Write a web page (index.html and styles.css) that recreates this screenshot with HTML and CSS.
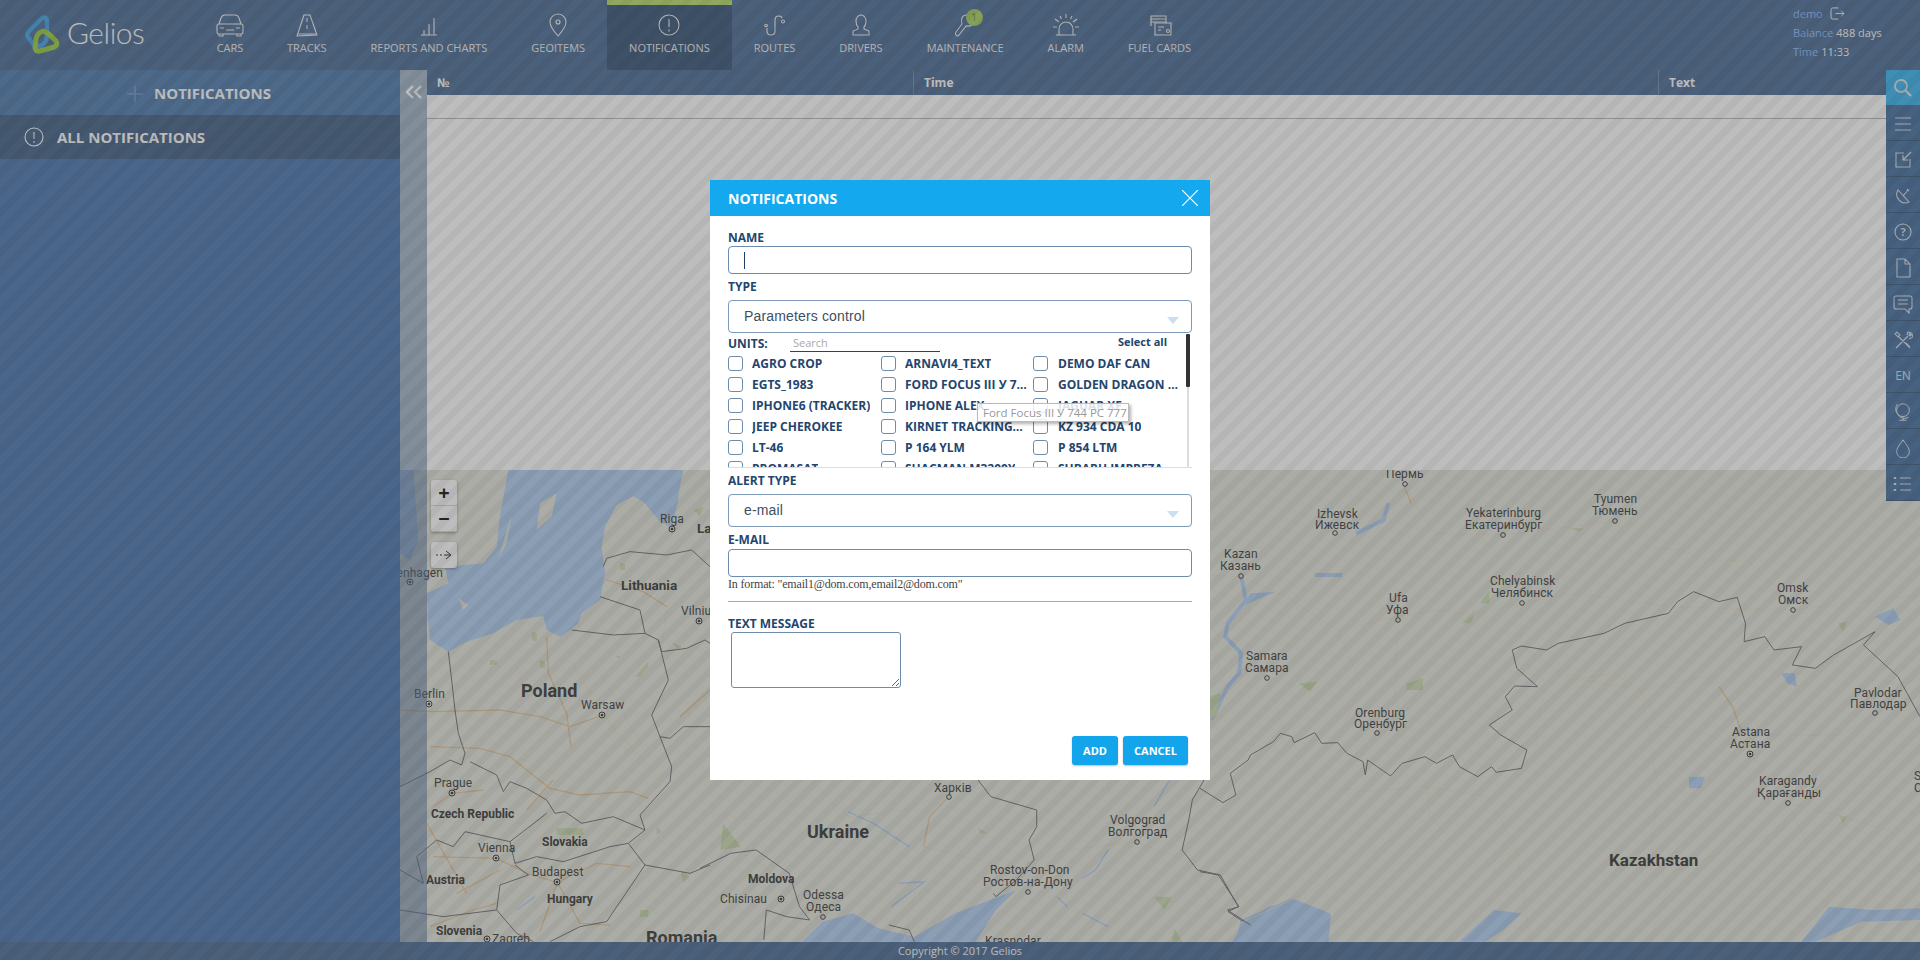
FILE: index.html
```html
<!DOCTYPE html>
<html lang="en">
<head>
<meta charset="utf-8">
<title>Gelios</title>
<link rel="stylesheet" href="styles.css">
</head>
<body>
<div class="app">
  <header class="topbar">
    <div class="brand">
      <svg class="brand-mark" viewBox="0 0 36 40"><path class="logo-blue" d="M18 3 Q23 1 23 7 L23 22 Q22 29 16 31 Q12 32 9 29 L4 22 Q2 19 5 16 Z"/><path class="logo-green" d="M19 16 Q23 17 26 20 L32 26 Q34 30 30 32 L16 36 Q11 37 11 32 L12 24 Q13 18 19 16Z"/></svg>
      <span class="brand-name">Gelios</span>
    </div>
    <nav class="nav">
      <a class="nav-item nav-item-first"><svg class="nav-icon" viewBox="0 0 32 24"><path d="M3 13q0-2 2-2h22q2 0 2 2v6q0 2-2 2H5q-2 0-2-2z"/><path d="M5 11l2-6q1-3 4-3h10q3 0 4 3l2 6M5 21v2h4v-2M23 21v2h4v-2M6 15h4M22 15h4M12 17h8"/></svg><span>CARS</span></a>
      <a class="nav-item"><svg class="nav-icon" viewBox="0 0 32 24"><path d="M6 23L13 2h6l7 20zM16 5v4M16 12v4M6.500 21h19"/></svg><span>TRACKS</span></a>
      <a class="nav-item"><svg class="nav-icon" viewBox="0 0 32 24"><path d="M8 22h16M11 22v-5M16 22V11M21 22V5"/></svg><span>REPORTS AND CHARTS</span></a>
      <a class="nav-item"><svg class="nav-icon" viewBox="0 0 32 24"><path d="M16 23q-8-9-8-14a8 8 0 0 1 16 0q0 5-8 14z"/><circle cx="16" cy="9" r="2"/></svg><span>GEOITEMS</span></a>
      <a class="nav-item is-active"><svg class="nav-icon" viewBox="0 0 32 24"><circle cx="16" cy="12" r="10"/><path d="M16 6v8M16 16.500v2"/></svg><span>NOTIFICATIONS</span></a>
      <a class="nav-item"><svg class="nav-icon" viewBox="0 0 32 24"><path d="M8 15v3q0 4 4 4t4-4V7q0-4 4-4 2.500 0 3 2"/><circle cx="7" cy="12.500" r="1.300"/><circle cx="24" cy="8.500" r="1.500"/></svg><span>ROUTES</span></a>
      <a class="nav-item"><svg class="nav-icon" viewBox="0 0 32 24"><path d="M11 8a5 6 0 0 1 10 0q0 4-2 6v2l5 2v4H8v-4l5-2v-2q-2-2-2-6z"/></svg><span>DRIVERS</span></a>
      <a class="nav-item nav-item-badged"><svg class="nav-icon" viewBox="0 0 32 24"><path d="M17 2q7 0 7 6t-7 5l-7 9q-2 2-3 0t0-3l6-8q-2-8 4-9z"/></svg><span>MAINTENANCE</span><b class="badge">1</b></a>
      <a class="nav-item"><svg class="nav-icon" viewBox="0 0 32 24"><path d="M9 22v-6a7 7 0 0 1 14 0v6M6 22h20M3 14h4M25 14h4M5 6l4 3M27 6l-4 3M16 1v4M10 3l1.500 3M22 3l-1.500 3"/></svg><span>ALARM</span></a>
      <a class="nav-item"><svg class="nav-icon" viewBox="0 0 32 24"><path d="M8 13V3h15v7M8 6h15M8 9h15"/><path d="M12 10h16v12H12zM15 14h6M15 17h3"/><circle cx="25" cy="18" r="1.500"/></svg><span>FUEL CARDS</span></a>
    </nav>
    <div class="account">
      <div class="account-line"><span class="muted">demo</span><svg class="logout" viewBox="0 0 16 14"><path d="M9 1H3q-2 0-2 2v8q0 2 2 2h6M6 7h9M12 4l3 3-3 3"/></svg></div>
      <div class="account-line"><span class="muted">Balance</span> 488 days</div>
      <div class="account-line"><span class="muted">Time</span> 11:33</div>
    </div>
  </header>

  <main class="main">
    <aside class="sidebar">
      <div class="side-head"><svg class="side-plus" viewBox="0 0 16 16"><path d="M8 0v16M0 8h16"/></svg><span>NOTIFICATIONS</span></div>
      <div class="side-row"><svg class="side-icon" viewBox="0 0 20 20"><circle cx="10" cy="10" r="9"/><path d="M10 5v7M10 14v2"/></svg><span>ALL NOTIFICATIONS</span></div>
    </aside>

    <section class="workspace">
      <div class="collapse-bar"><svg class="collapse-icon" viewBox="0 0 16 14"><path d="M7 1L1 7l6 6M15 1L9 7l6 6"/></svg></div>
      <div class="table-area">
        <div class="table-head">
          <div class="col col-num">№</div>
          <div class="col col-time">Time</div>
          <div class="col col-text">Text</div>
        </div>
        <div class="table-body"><div class="table-rule"></div></div>
      </div>

      <div class="map">
        <svg class="map-canvas" viewBox="400 470 1520 472" preserveAspectRatio="none">
          <g transform="translate(400 460) scale(.33333)">
            <path class="water" d="M325,30 L850,30 C845,60 835,90 835,120 L815,205 L775,180 L735,130 L700,108 L650,135 L615,200 L605,260 L615,340 L600,420 L545,460 L535,490 L510,510 L480,530 L440,510 L430,468 L350,480 L280,520 L200,545 L145,575 L90,540 L85,495 L80,400 L145,370 L135,320 L250,310 L290,260 L300,165 Z"/>
            <path class="water" d="M0,30 L40,30 L55,240 L30,300 L0,280Z"/>
            <path class="land" d="M410,210 L420,130 L470,100 L455,170 Z M295,295 L335,165 L320,250Z M175,415 L205,435 L190,450Z"/>
            <path class="green" d="M395,515l15,5v25l-15,-5zM270,600h20v15h-20zM420,600l15,5v20h-15zM705,650l40,-45v15l-25,30zM815,545l30,15l-10,10zM470,1105h80v20h-80zM840,1230l30,20l-20,20zM720,1350h25v20h-25zM770,1100l15,15l-15,10zM660,310h15v20h-15zM880,150l30,-10l-10,30z"/>
            <path class="water-thin" d="M350,1350l55,-40M650,590h10"/>
            <path class="road" d="M0,750 L100,755 L300,750 L420,770 L510,800 L607,766 M440,530 L445,640 L500,760 L513,860 M90,860 L240,865 L330,890 L450,985 L540,1005 L690,995 L745,1015 M620,360 L730,395 L800,440 M157,1000 L100,1040 M157,1000 L250,990 M460,960 L380,1050 M290,1195 L380,1240 L472,1267 L590,1210 L690,1220 M472,1267 L420,1415 M472,1267 L540,1390 L630,1395 M100,1190 L290,1195 M170,1300 L300,1230 M90,1400 L220,1350 L290,1330 M840,770 L930,690 M80,1090 L200,1300"/>
            <path class="road-thin" d="M330,880 L480,950 M510,600 L700,900 M600,640 L740,880 M800,450 L780,600 M230,700 L300,580 M350,620 L410,770 M620,780 L820,1000 M300,1100 L460,1070 M600,1100 L690,1130 M20,600 L80,700 M0,1170 L150,1160 M20,400 L90,520"/>
            <path class="border" d="M145,575 L155,660 L165,750 L175,820 L195,880 L185,915 L150,900 L90,935 L0,980 M210,905 L290,945 L310,995 L330,965 L380,985 L440,1020 L465,1060 L495,1055 L545,1090 L640,1070 L735,1110 L685,1150 L735,1215 L870,1240 L930,1215 M775,540 L805,660 L755,765 L780,830 L815,920 L810,965 L720,1065 L735,1110 M780,830 L810,835 L850,800 L930,800 M610,320 L620,295 L690,275 L800,285 L875,270 L930,320 M600,410 L720,450 L735,520 L775,540 L785,575 L860,565 L915,540 L930,550 M515,510 L640,525 L735,520 M195,1115 L330,1145 L440,1060 M195,1115 L160,1160 L110,1140 L50,1190 L70,1270 L0,1230 M330,1145 L345,1210 L410,1190 L490,1205 L630,1160 L685,1150 M345,1215 L385,1245 L300,1275 L290,1350 L130,1370 L0,1350 M290,1350 L350,1420 L400,1445 M735,1215 L620,1385 L540,1400 L450,1445"/>
          </g>
          <g transform="translate(700 620) scale(.5102 .33333)">
            <path class="water" d="M200,965 L240,905 L300,880 L350,925 L420,950 L500,880 L620,810 L580,870 L540,965 Z M1050,965 L1060,900 L1120,860 L1160,835 L1235,880 L1230,965 Z"/>
            <path class="water-thin" d="M290,575 L340,610 L370,640 L410,680 M800,690 L775,750 L750,775 M390,790 L440,785 L375,860 M700,830 L720,860 M750,880 L800,920 M920,480 L890,560"/>
            <path class="green" d="M45,610 L80,680 L40,690 Z M890,830 L925,830 L910,870 Z M930,925 L945,965 L925,965 Z M545,625 L565,640 L550,640 Z"/>
            <path class="road" d="M487,530 L450,590 L438,680"/>
            <path class="road-thin" d="M0,575 L120,600 L230,480 M230,500 L290,590 L400,570 L470,530 M440,680 L570,730 L640,810 M640,730 L720,690 L856,666 L950,720 L1010,880 M100,700 L230,900 M440,680 L420,830 L400,960 M856,666 L800,500 M1040,900 L1140,780"/>
            <path class="border" d="M545,480 L570,530 L660,570 L660,620 L645,660 L655,720 L620,780 L580,830 L575,820 M60,700 L110,690 L175,760 L195,860 L215,900 L170,890 L130,870 L125,960 M0,745 L60,700 M370,915 L410,930 L420,965 M988,480 L965,540 L958,600 L945,690 L975,750 L1020,765 L1055,860 L1035,875 L1075,915"/>
          </g>
          <g transform="translate(1200 460) scale(.45918 .33333)">
            <path class="water-thin thick" d="M90,350 L100,420 L60,490 L55,530 L90,580 L85,640 L60,680 L25,780 M250,345 L310,345 M410,130 L400,180 L340,220"/>
            <path class="water" d="M70,1445 L100,1380 L150,1340 L210,1320 L285,1365 L280,1445 Z M565,1445 L640,1350 L700,1360 L660,1410 L620,1445 Z M1310,1445 L1370,1340 L1470,1350 L1568,1345 L1568,1380 L1440,1385 L1340,1445 Z M1265,640 L1295,640 L1300,680 L1280,670 Z M1470,470 L1510,445 L1525,480 L1500,495 Z M1065,950 L1100,950 L1090,985 L1065,985 Z M110,400 L165,395 L90,440 Z"/>
            <path class="green" d="M570,490 L600,450 L590,490 Z M450,670 L485,655 L485,690 L450,690 Z M215,670 L255,665 L240,695 Z M610,430 L630,390 L630,430 Z M1390,490 L1410,485 L1400,515 Z M20,710 L45,700 L35,770 L20,770 Z M805,205 L835,205 L825,215Z M1390,1065 L1410,1070 L1400,1090Z"/>
            <path class="road" d="M445,80 L460,130 M1130,680 L1160,740 L1178,810"/>
            <path class="road-thin" d="M0,345 L90,350 L200,420 L300,510 L430,470 L520,450 L580,465 L700,430 L820,400 L1020,440 L1290,450 L1568,405 M445,80 L510,220 L660,225 L800,200 L903,183 L950,260 L1050,270 L1100,305 L1190,300 L1240,360 L1290,450 M430,480 L425,730 M386,818 L300,850 L350,670 L300,510 M145,654 L180,800 L260,980 L360,995 L490,980 L630,1010 L690,1170 L720,1445 M700,430 L700,560 L810,660 L900,640 L960,690 L1000,800 L1080,810 L1198,880 L1280,1030 L1370,1060 L1500,1110 L1568,1220 M1471,760 L1400,825 L1270,825 L1198,810 M1100,650 L1130,680 M1100,650 L960,690 L820,655 L740,740 L730,870 M960,690 L1000,1000 L980,1150 L1020,1280 L980,1445 M495,980 L500,1070 L610,1230 L690,1160 M500,1070 L230,1300 L0,1445 M1280,1030 L1270,1110 L1190,1150 L1020,1240 M1280,1030 L1370,1290 L1360,1360 M0,440 L60,700"/>
            <path class="border" d="M0,985 L50,1028 L78,1005 L66,940 L105,900 L110,885 L160,845 L175,820 L200,830 L205,848 L250,818 L265,850 L300,848 L320,880 L355,905 L360,945 L365,900 L415,948 L440,910 L490,890 L515,910 L550,885 L565,920 L605,950 L635,920 L645,937 L700,925 L712,870 L655,825 L630,795 L680,750 L665,710 L685,678 L735,680 L690,625 L680,570 L700,558 L755,570 L780,550 L880,520 L925,490 L1020,460 L1040,425 L1075,395 L1130,425 L1170,412 L1188,490 L1185,545 L1230,530 L1250,570 L1310,560 L1290,615 L1340,625 L1380,585 L1470,515 L1445,555 L1520,650 L1568,770 M0,1235 L40,1245 L85,1340 L60,1350 L110,1395"/>
          </g>

          <g class="cities">
            <text class="end" x="443" y="577">enhagen</text><text x="660" y="523">Riga</text>
            <text x="681" y="615">Vilnius</text><text x="581" y="709">Warsaw</text><text x="414" y="698">Berlin</text>
            <text x="434" y="787">Prague</text><text x="478" y="852">Vienna</text><text x="532" y="876">Budapest</text>
            <text x="492" y="943">Zagreb</text><text x="934" y="792">Харків</text>
            <text x="720" y="903">Chisinau</text><text x="803" y="899">Odessa</text><text x="806" y="911">Одеса</text>
            <text x="990" y="874">Rostov-on-Don</text><text x="983" y="886">Ростов-на-Дону</text>
            <text x="1110" y="824">Volgograd</text><text x="1108" y="836">Волгоград</text><text x="985" y="945">Krasnodar</text>
            <text x="1386" y="478">Пермь</text><text x="1317" y="518">Izhevsk</text><text x="1315" y="529">Ижевск</text>
            <text x="1466" y="517">Yekaterinburg</text><text x="1465" y="529">Екатеринбург</text>
            <text x="1594" y="503">Tyumen</text><text x="1592" y="515">Тюмень</text>
            <text x="1224" y="558">Kazan</text><text x="1220" y="570">Казань</text>
            <text x="1490" y="585">Chelyabinsk</text><text x="1491" y="597">Челябинск</text>
            <text x="1777" y="592">Omsk</text><text x="1778" y="604">Омск</text>
            <text x="1389" y="602">Ufa</text><text x="1386" y="614">Уфа</text>
            <text x="1246" y="660">Samara</text><text x="1245" y="672">Самара</text>
            <text x="1355" y="717">Orenburg</text><text x="1354" y="728">Оренбург</text>
            <text x="1854" y="697">Pavlodar</text><text x="1850" y="708">Павлодар</text>
            <text x="1732" y="736">Astana</text><text x="1730" y="748">Астана</text>
            <text x="1759" y="785">Karagandy</text><text x="1757" y="797">Қарағанды</text>
            <text x="1914" y="780">S</text><text x="1914" y="792">C</text>
          </g>
          <g class="countries">
            <text x="621" y="590" class="c13">Lithuania</text><text x="697" y="533" class="c13">La</text>
            <text x="521" y="697" class="c19">Poland</text><text x="431" y="818" class="c12">Czech Republic</text>
            <text x="542" y="846" class="c12">Slovakia</text><text x="426" y="884" class="c12">Austria</text>
            <text x="547" y="903" class="c12">Hungary</text><text x="436" y="935" class="c12">Slovenia</text>
            <text x="646" y="944" class="c19">Romania</text><text x="807" y="838" class="c18">Ukraine</text>
            <text x="748" y="883" class="c12">Moldova</text><text x="1609" y="866" class="c17">Kazakhstan</text>
          </g>
          <g class="dots">
            <circle cx="410" cy="582" r="3"/><circle cx="672" cy="529" r="3"/><circle cx="699" cy="621" r="3"/><circle cx="602" cy="715" r="3"/><circle cx="429" cy="704" r="3"/><circle cx="452" cy="793" r="3"/><circle cx="496" cy="858" r="3"/><circle cx="557" cy="882" r="3"/><circle cx="487" cy="939" r="3"/><circle cx="781" cy="899" r="3"/><circle cx="1750" cy="754" r="3"/>
          </g>
          <g class="dots-core">
            <circle cx="410" cy="582" r="1.300"/><circle cx="672" cy="529" r="1.300"/><circle cx="699" cy="621" r="1.300"/><circle cx="602" cy="715" r="1.300"/><circle cx="429" cy="704" r="1.300"/><circle cx="452" cy="793" r="1.300"/><circle cx="496" cy="858" r="1.300"/><circle cx="557" cy="882" r="1.300"/><circle cx="487" cy="939" r="1.300"/><circle cx="781" cy="899" r="1.300"/><circle cx="1750" cy="754" r="1.300"/>
          </g>
          <g class="dots">
            <circle cx="949" cy="797" r="2.300"/><circle cx="823" cy="917" r="2.300"/><circle cx="1028" cy="892" r="2.300"/><circle cx="1137" cy="842" r="2.300"/><circle cx="1405" cy="484" r="2.300"/><circle cx="1335" cy="533" r="2.300"/><circle cx="1503" cy="535" r="2.300"/><circle cx="1615" cy="521" r="2.300"/><circle cx="1241" cy="576" r="2.300"/><circle cx="1522" cy="603" r="2.300"/><circle cx="1793" cy="610" r="2.300"/><circle cx="1398" cy="620" r="2.300"/><circle cx="1267" cy="678" r="2.300"/><circle cx="1377" cy="733" r="2.300"/><circle cx="1875" cy="713" r="2.300"/><circle cx="1788" cy="803" r="2.300"/>
          </g>
        </svg>
        <div class="zoom-box">
          <button class="map-btn">+</button>
          <button class="map-btn">&minus;</button>
        </div>
        <button class="map-btn map-btn-solo"><svg class="route-arrow" viewBox="0 0 16 10"><path d="M0 5h2M4 5h2M8 5h6M10 1l5 4-5 4"/></svg></button>
      </div>

      <div class="toolstrip">
        <div class="tool tool-on"><svg viewBox="0 0 20 20"><circle cx="8" cy="8" r="6"/><path class="heavy" d="M12.500 12.500L18 18"/></svg></div>
        <div class="tool"><svg viewBox="0 0 20 20"><path d="M2 4h16M2 10h16M2 16h16"/></svg></div>
        <div class="tool"><svg viewBox="0 0 20 20"><path d="M11 3H3v14h14V9M18 2l-8 8M10 5v5h5"/></svg></div>
        <div class="tool"><svg viewBox="0 0 20 20"><path d="M5 4a8.500 8.500 0 0 0 11 12zM10 10l5-6M14 3l2 2"/></svg></div>
        <div class="tool"><svg viewBox="0 0 20 20"><circle cx="10" cy="10" r="8"/><text class="tool-q" x="10" y="14">?</text></svg></div>
        <div class="tool"><svg viewBox="0 0 20 20"><path d="M4 1h8l5 5v13H4zM12 1v5h5"/></svg></div>
        <div class="tool"><svg viewBox="0 0 20 20"><path d="M3 2h14q2 0 2 2v9q0 2-2 2h-1v4l-4-4H3q-2 0-2-2V4q0-2 2-2zM5 6h10M5 10h10"/></svg></div>
        <div class="tool"><svg viewBox="0 0 20 20"><path d="M3 18L15 6M14 5l1-3 3 1-2 2 1 1 2-2 1 3-4 2M17 18L5 6M2 4l2-2 3 3-2 2zM13 13l4 4"/></svg></div>
        <div class="tool tool-text">EN</div>
        <div class="tool"><svg viewBox="0 0 20 22"><circle cx="10" cy="9" r="7"/><path d="M4 2a10 10 0 0 0 12 15M10 17v3M6 20h8"/></svg></div>
        <div class="tool"><svg viewBox="0 0 20 22"><path d="M10 2q7 9 7 13a7 7 0 0 1-14 0q0-4 7-13z"/></svg></div>
        <div class="tool"><svg viewBox="0 0 20 20"><path d="M7 4h11M7 10h11M7 16h11"/><path class="heavy" d="M2 3v2M2 9v2M2 15v2"/></svg></div>
      </div>
    </section>
  </main>

  <footer class="footer">Copyright © 2017 Gelios</footer>
</div>

<div class="scrim"></div>

<div class="modal">
  <div class="modal-head">
    <span>NOTIFICATIONS</span>
    <svg class="modal-close" viewBox="0 0 16 16"><path d="M0 0l16 16M16 0L0 16"/></svg>
  </div>
  <div class="modal-body">
    <label class="f-label f-first">NAME</label>
    <div class="field"><span class="caret"></span></div>
    <label class="f-label f-next">TYPE</label>
    <div class="select select-tall"><span>Parameters control</span><i class="select-arrow"></i></div>

    <div class="units">
      <div class="units-head">
        <span class="f-label">UNITS:</span>
        <span class="units-search">Search</span>
        <span class="units-all">Select all</span>
      </div>
      <div class="units-grid">
        <div class="unit"><i class="check"></i><span>AGRO CROP</span></div>
        <div class="unit"><i class="check"></i><span>ARNAVI4_TEXT</span></div>
        <div class="unit"><i class="check"></i><span>DEMO DAF CAN</span></div>
        <div class="unit"><i class="check"></i><span>EGTS_1983</span></div>
        <div class="unit"><i class="check"></i><span>FORD FOCUS III У 744 PC 777</span></div>
        <div class="unit"><i class="check"></i><span>GOLDEN DRAGON XML</span></div>
        <div class="unit"><i class="check"></i><span>IPHONE6 (TRACKER)</span></div>
        <div class="unit"><i class="check"></i><span>IPHONE ALEX</span></div>
        <div class="unit"><i class="check"></i><span>JAGUAR XF</span></div>
        <div class="unit"><i class="check"></i><span>JEEP CHEROKEE</span></div>
        <div class="unit unit-tight"><i class="check"></i><span>KIRNET TRACKING SYSTEM</span></div>
        <div class="unit"><i class="check"></i><span>KZ 934 CDA 10</span></div>
        <div class="unit"><i class="check"></i><span>LT-46</span></div>
        <div class="unit"><i class="check"></i><span>P 164 YLM</span></div>
        <div class="unit"><i class="check"></i><span>P 854 LTM</span></div>
        <div class="unit"><i class="check"></i><span>PROMASAT</span></div>
        <div class="unit"><i class="check"></i><span>SHACMAN M3200Y</span></div>
        <div class="unit"><i class="check"></i><span>SUBARU IMPREZA</span></div>
      </div>
      <div class="units-track"></div>
      <div class="units-thumb"></div>
    </div>

    <label class="f-label f-alert">ALERT TYPE</label>
    <div class="select"><span>e-mail</span><i class="select-arrow"></i></div>
    <label class="f-label f-mail">E-MAIL</label>
    <input class="field field-input" type="text">
    <div class="hint">In format: "email1@dom.com,email2@dom.com"</div>
    <hr class="rule">
    <label class="f-label f-msg">TEXT MESSAGE</label>
    <textarea class="message"></textarea>
    <div class="actions">
      <button class="btn">ADD</button>
      <button class="btn">CANCEL</button>
    </div>
  </div>
  <div class="tip">Ford Focus III У 744 PC 777</div>
</div>
</body>
</html>
```
FILE: styles.css
```css
* { box-sizing: border-box; }
html, body { margin: 0; height: 100%; overflow: hidden; }
body { font-family: "Open Sans", "Liberation Sans", sans-serif; color: #fff; background: #fff; }

.app { display: flex; flex-direction: column; width: 1920px; height: 960px; }

/* top bar */
.topbar { flex: none; height: 70px; display: flex; background: #6682a5; position: relative; }
.brand { width: 192px; flex: none; display: flex; align-items: center; padding: 0 0 6px 24px; }
.brand-mark { width: 36px; height: 40px; flex: none; margin-top: 6px; }
.logo-blue { fill: none; stroke: #5cb0ea; stroke-width: 4.500; stroke-linejoin: round; }
.logo-green { fill: none; stroke: #a9d65c; stroke-width: 5; stroke-linejoin: round; }
.brand-name { font-family: Lato, sans-serif; font-weight: 300; font-size: 30px; letter-spacing: -.5px; margin-left: 7px; color: #fff; }
.nav { display: flex; flex: none; }
.nav-item { height: 70px; padding: 13px 22px 0; display: flex; flex-direction: column; align-items: center; font-size: 11px; line-height: 16px; color: #f4f4f4; position: relative; white-space: nowrap; }
.nav-item-first { padding-right: 19px; }
.nav-item.is-active { background: #556e8c; box-shadow: inset 0 5px 0 #c3e57f; }
.nav-icon { width: 32px; height: 24px; flex: none; margin-bottom: 3px; fill: none; stroke: #f4f4f4; stroke-width: 1.100; }
.badge { position: absolute; left: 61px; top: 9px; width: 17px; height: 17px; border-radius: 50%; background: #b4d878; color: #7b9650; font-size: 10px; font-weight: 400; line-height: 17px; text-align: center; }
.account { margin-left: auto; width: 127px; flex: none; padding-top: 4px; font-size: 11px; color: #fff; }
.account-line { height: 19px; line-height: 19px; display: flex; gap: 3px; align-items: center; }
.muted { color: #9cc6ff; }
.logout { width: 15px; height: 13px; margin-left: 4px; fill: none; stroke: #fff; stroke-width: 1; }

/* main */
.main { flex: 1; min-height: 0; display: flex; }
.sidebar { width: 400px; flex: none; background: #648bbc; font-size: 15px; font-weight: 700; }
.side-head { height: 45px; background: #698fba; display: flex; align-items: center; padding-left: 127px; gap: 11px; }
.side-plus { width: 16px; height: 16px; fill: none; stroke: #8fb3dd; stroke-width: 1.200; margin-top: 2px; }
.side-row { height: 44px; background: #5d7899; display: flex; align-items: center; padding-left: 24px; gap: 13px; }
.side-icon { width: 20px; height: 20px; fill: none; stroke: #fff; stroke-width: 1.100; flex: none; }

.workspace { flex: 1; min-width: 0; position: relative; display: flex; flex-direction: column; }
.collapse-bar { position: absolute; left: 0; top: 0; bottom: 0; width: 27px; background: rgba(100,130,165,.5); z-index: 2; display: flex; justify-content: center; align-items: flex-start; padding-top: 15px; }
.collapse-icon { width: 16px; height: 14px; fill: none; stroke: #fff; stroke-width: 2.400; }

.table-area { height: 400px; flex: none; margin-left: 27px; background: #fff; }
.table-head { height: 25px; background: #6682a5; display: grid; grid-template-columns: 486px 745px 1fr; font-size: 12px; font-weight: 700; color: #fff; }
.col { line-height: 25px; padding-left: 10px; border-left: 1px solid #8a9db4; }
.col-num { border-left: 0; }
.table-body { padding-top: 23px; }
.table-rule { height: 1px; background: #c3c3c3; }

.map { flex: 1; min-height: 0; position: relative; background: #e8e9e0; overflow: hidden; }
.map-canvas { display: block; width: 100%; height: 100%; }
.land { fill: #e8e9e0; }
.water { fill: #bcd5f3; }
.water-thin { fill: none; stroke: #bcd5f3; stroke-width: 1.500; vector-effect: non-scaling-stroke; }
.water-thin.thick { stroke-width: 4; }
.green { fill: #d0dfba; }
.road { fill: none; stroke: #e9cca6; stroke-width: 1.300; vector-effect: non-scaling-stroke; }
.road-thin { fill: none; stroke: #ebe1cc; stroke-width: .8; vector-effect: non-scaling-stroke; }
.border { fill: none; stroke: #85858a; stroke-width: 1; vector-effect: non-scaling-stroke; }
.cities text { font-family: Roboto, sans-serif; font-size: 12px; fill: #5a5a5a; letter-spacing: .1px; }
.cities .end { text-anchor: end; }
.countries text { font-family: Roboto, sans-serif; font-weight: 700; fill: #555; }
.c12 { font-size: 12px; }
.c13 { font-size: 13.500px; }
.c17 { font-size: 17px; }
.c18 { font-size: 18px; }
.c19 { font-size: 18px; }
.dots circle { fill: #e8e9e0; stroke: #555; stroke-width: 1; }
.dots-core circle { fill: #555; }

.zoom-box { position: absolute; left: 31px; top: 10px; width: 26px; height: 52px; border-radius: 3px; box-shadow: 0 1px 3px rgba(0,0,0,.3); overflow: hidden; display: flex; flex-direction: column; z-index: 3; }
.map-btn { width: 26px; height: 26px; padding: 0; border: 0; background: #fff; color: #333; font: 700 20px/22px "Open Sans", sans-serif; border-bottom: 1px solid #ddd; }
.map-btn-solo { position: absolute; left: 31px; top: 72px; border: 0; border-radius: 3px; box-shadow: 0 1px 3px rgba(0,0,0,.3); z-index: 3; display: flex; align-items: center; justify-content: center; }
.route-arrow { width: 16px; height: 10px; fill: none; stroke: #333; stroke-width: .9; }

.toolstrip { position: absolute; right: 0; top: 0; width: 34px; z-index: 4; background: #6083ae; }
.tool { height: 36px; padding-top: 2px; display: flex; align-items: center; justify-content: center; border-bottom: 1px solid #53708f; }
.tool svg { width: 20px; height: 20px; fill: none; stroke: #dfe7ef; stroke-width: 1.100; }
.tool .heavy { stroke-width: 2.400; }
.tool-on { height: 35px; padding-top: 0; background: #57c0f4; border-bottom: 0; }
.tool-on svg { stroke-width: 1.800; }
.tool-text { font-size: 12px; color: #dfe7ef; }
.tool-q { font: 700 11px "Open Sans", sans-serif; fill: #dfe7ef; stroke: none; text-anchor: middle; }

.footer { flex: none; height: 18px; background: #6682a5; font-size: 11px; line-height: 18px; text-align: center; color: #fff; }

/* dim layer */
.scrim { position: fixed; inset: 0; z-index: 10; background: repeating-linear-gradient(135deg, rgba(0,0,0,.26) 0 7px, rgba(0,0,0,.29) 7px 14px); }

/* dialog */
.modal { position: fixed; left: 710px; top: 180px; width: 500px; height: 600px; background: #fff; z-index: 20; color: #1f3f66; }
.modal-head { height: 36px; background: #14a9ee; color: #fff; font-size: 14px; font-weight: 700; display: flex; align-items: center; justify-content: space-between; padding: 0 12px 0 18px; }
.modal-close { width: 16px; height: 16px; fill: none; stroke: #fff; stroke-width: 1.200; }
.modal-body { padding: 0 18px; position: relative; }
.f-label { display: block; height: 16px; line-height: 16px; font-size: 12px; font-weight: 700; color: #24456d; }
.f-first { margin-top: 14px; }
.f-next { margin-top: 5px; margin-bottom: 5px; }
.f-alert { margin-top: 5px; margin-bottom: 5px; }
.f-mail { margin-top: 5px; margin-bottom: 1px; }
.f-msg { margin-top: 14px; }
.field { display: flex; align-items: center; width: 464px; height: 28px; padding: 0 15px; border: 1px solid #6d8cad; border-radius: 4px; background: #fff; }
.field-input { display: block; outline: 0; }
.caret { width: 1px; height: 17px; background: #1f3f66; }
.select { position: relative; width: 464px; height: 33px; padding: 0 0 2px 15px; display: flex; align-items: center; border: 1px solid #7d9ab8; border-radius: 4px; font-family: "Liberation Sans", sans-serif; font-size: 14px; letter-spacing: .15px; color: #40505f; }
.select-tall { margin-bottom: 1px; }
.select-arrow { position: absolute; right: 12px; top: 16px; border-style: solid; border-width: 7px 6px 0; border-color: #cbdff2 transparent transparent; }

.units { position: relative; width: 464px; height: 134px; overflow: hidden; border-bottom: 1px solid #ddd; }
.units-head { height: 19px; display: flex; align-items: center; }
.units-head .f-label { width: 62px; }
.units-search { width: 150px; height: 16px; margin-top: 1px; padding-left: 3px; font-size: 11px; line-height: 14px; color: #aaa; border-bottom: 1px solid #23466f; }
.units-all { position: absolute; right: 25px; top: 0; font-size: 11px; font-weight: 700; line-height: 16px; color: #24456d; }
.units-grid { display: grid; grid-template-columns: 153px 152px 159px; grid-auto-rows: 21px; }
.unit { display: flex; align-items: center; gap: 9px; font-size: 12px; font-weight: 700; color: #24456d; min-width: 0; }
.unit span { overflow: hidden; white-space: nowrap; text-overflow: ellipsis; }
.unit:nth-child(3n+2) span { max-width: 123px; }
.unit:nth-child(3n+2).unit-tight span { max-width: 120px; }
.unit:nth-child(3n) { gap: 10px; }
.unit:nth-child(3n) span { max-width: 122px; }
.check { flex: none; width: 15px; height: 15px; border: 1px solid #6d8cad; border-radius: 3px; }
.units-track { position: absolute; right: 3px; top: 0; bottom: 0; width: 2px; background: #ddd; }
.units-thumb { position: absolute; right: 2px; top: 0; width: 4px; height: 53px; background: #333; border-radius: 1px; }

.hint { height: 14px; font-family: "Liberation Serif", serif; font-size: 12px; letter-spacing: -.17px; line-height: 14px; color: #444; }
.rule { height: 1px; margin: 10px 0 0; border: 0; background: #aaa; }
.message { display: block; width: 170px; height: 56px; margin-left: 3px; border: 1px solid #6d8cad; border-radius: 3px; outline: 0; background: #fff; }
.actions { display: flex; justify-content: flex-end; gap: 5px; margin-top: 48px; padding-right: 4px; }
.btn { height: 29px; border: 0; border-radius: 3px; background: #12a5ec; color: #fff; font: 700 11px "Open Sans", sans-serif; box-shadow: 0 1px 2px rgba(0,0,0,.25); padding: 0; }
.btn:first-child { width: 46px; }
.btn:last-child { width: 65px; }

.tip { position: absolute; left: 267px; top: 223px; width: 152px; height: 19px; padding-left: 5px; background: rgba(255,255,255,.85); border: 1px solid #bbb; box-shadow: 2px 2px 3px rgba(0,0,0,.3); font-size: 11.500px; line-height: 17px; color: #999; white-space: nowrap; overflow: hidden; }
```
